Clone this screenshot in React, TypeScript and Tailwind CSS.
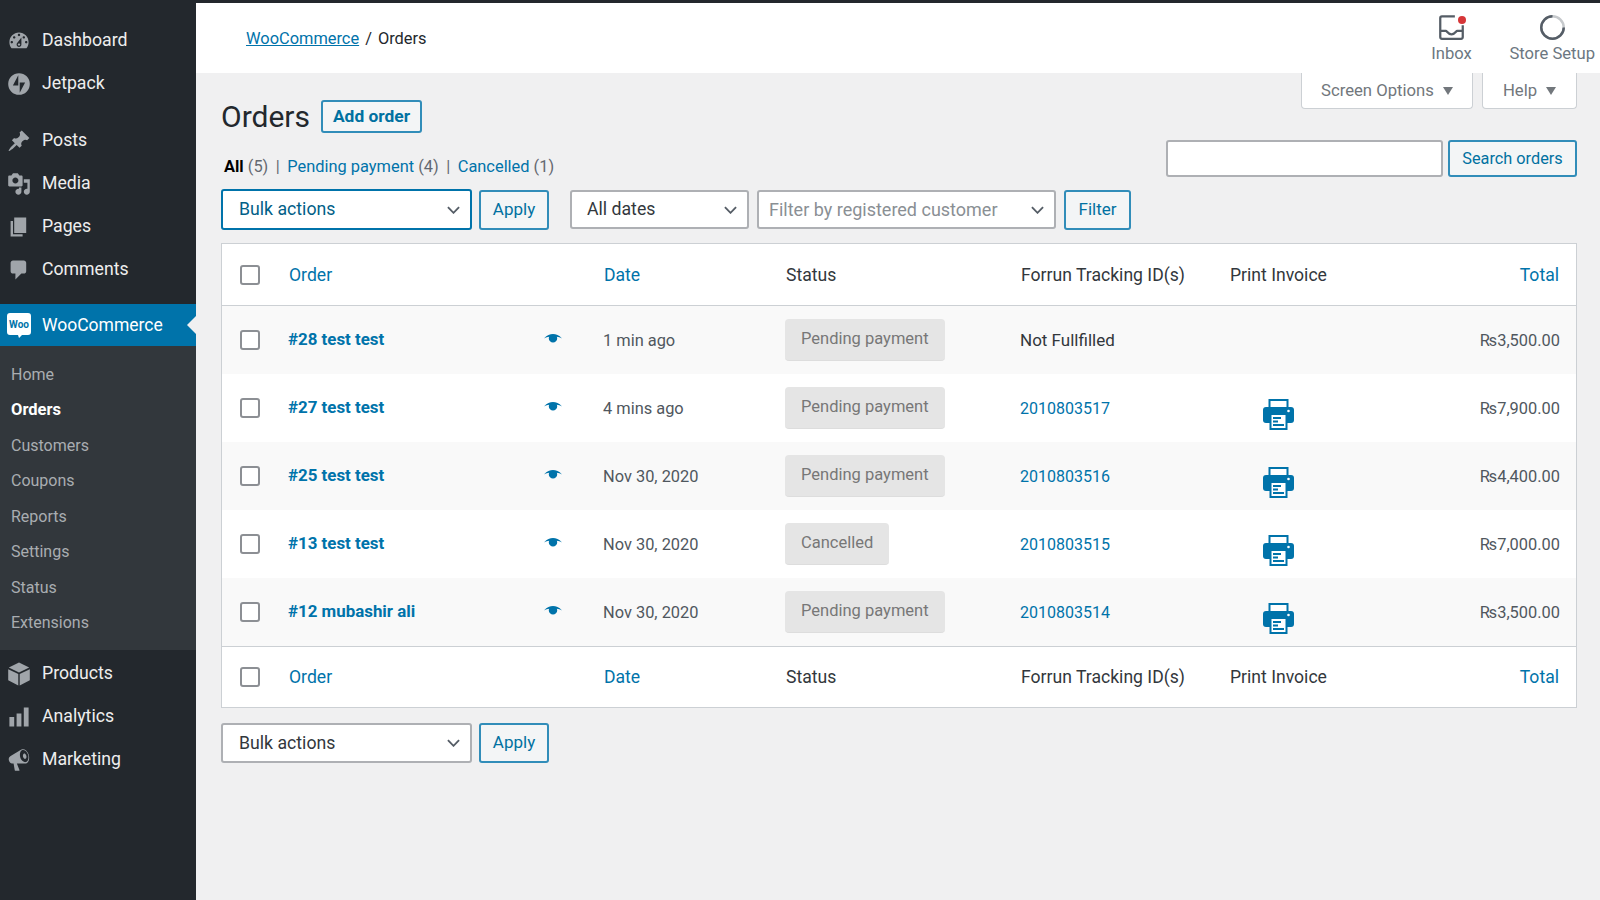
import type { ReactNode } from 'react'

const iconPaths: Record<string, string> = {
  dashboard: 'M3.76 16h12.48c1.1-1.37 1.76-3.11 1.76-5 0-4.42-3.58-8-8-8s-8 3.58-8 8c0 1.89.66 3.63 1.76 5zM10 4c.55 0 1 .45 1 1s-.45 1-1 1-1-.45-1-1 .45-1 1-1zM6 6c.55 0 1 .45 1 1s-.45 1-1 1-1-.45-1-1 .45-1 1-1zm8 0c.55 0 1 .45 1 1s-.45 1-1 1-1-.45-1-1 .45-1 1-1zm-5.37 5.55L12 7v6c0 1.1-.9 2-2 2s-2-.9-2-2c0-.57.24-1.08.63-1.45zM4 10c.55 0 1 .45 1 1s-.45 1-1 1-1-.45-1-1 .45-1 1-1zm12 0c.55 0 1 .45 1 1s-.45 1-1 1-1-.45-1-1 .45-1 1-1zm-5 3c0-.55-.45-1-1-1s-1 .45-1 1 .45 1 1 1 1-.45 1-1z',
  jetpack: 'M10 1a9 9 0 1 0 0 18 9 9 0 0 0 0-18zM9.4 11.3H4.9L9.4 2.8zM10.6 17.2V8.7h4.5z',
  posts: 'M10.44 3.02l1.82-1.82 6.36 6.35-1.83 1.82c-1.05-.68-2.48-.57-3.41.36l-.75.75c-.92.93-1.04 2.35-.35 3.41l-1.83 1.82-2.41-2.41-2.8 2.79c-.42.42-3.38 2.71-3.8 2.29s1.86-3.39 2.28-3.81l2.79-2.79L4.1 9.36l1.83-1.82c1.05.69 2.48.57 3.4-.36l.75-.75c.93-.92 1.05-2.35.36-3.41z',
  media: 'M13 11V4c0-.55-.45-1-1-1h-1.67L9 1H5L3.67 3H2c-.55 0-1 .45-1 1v7c0 .55.45 1 1 1h10c.55 0 1-.45 1-1zM7 4.5c1.38 0 2.5 1.12 2.5 2.5S8.38 9.5 7 9.5 4.5 8.38 4.5 7 5.62 4.5 7 4.5zM14 6h5v10.5c0 1.38-1.12 2.5-2.5 2.5S14 17.88 14 16.5s1.12-2.5 2.5-2.5c.17 0 .34.02.5.05V9h-3V6zm-4 8.05V13h2v3.5c0 1.38-1.12 2.5-2.5 2.5S7 17.88 7 16.5 8.12 14 9.5 14c.17 0 .34.02.5.05z',
  pages: 'M6 15V2h10v13H6zm-1 1h8v2H3V5h2v11z',
  comments: 'M5 2h9c1.1 0 2 .9 2 2v7c0 1.1-.9 2-2 2h-2l-5 5v-5H5c-1.1 0-2-.9-2-2V4c0-1.1.9-2 2-2z',
  products: 'M10 .500l8.500 4-8.500 4.200-8.500-4.200zM1 6l8.400 4.100V19.500L1 15.300zM19 6l-8.400 4.100V19.500l8.400-4.200z',
  analytics: 'M18 18V2h-4v16h4zm-6 0V7H8v11h4zm-6 0v-8H2v8h4z',
  marketing: 'M18.15 5.94c.46 1.62.38 3.22-.02 4.48-.42 1.28-1.26 2.18-2.3 2.48-.16.06-.26.06-.4.06-.06.02-.12.02-.18.02-.06.02-.14.02-.22.02h-6.8l2.22 5.5c.02.14-.06.26-.14.34-.08.1-.24.16-.34.16H6.95c-.1 0-.26-.06-.34-.16-.08-.08-.16-.2-.14-.34l-1-5.5H4.25l-.02-.02c-.5.06-1.08-.18-1.54-.62s-.88-1.08-1.06-1.88c-.24-.8-.2-1.56-.02-2.2.18-.62.58-1.08 1.06-1.3l.02-.02 9-5.4c.1-.06.18-.1.24-.16.06-.04.14-.08.24-.12.16-.08.28-.12.5-.18 1.04-.3 2.24.1 3.22.98s1.86 2.2 2.32 3.82zm-2.42 5.78v-.02c.88-.26 1.52-1.02 1.86-2.1s.38-2.5 0-3.9c-.4-1.38-1.16-2.5-2.02-3.24-.86-.72-1.82-1.04-2.7-.78-.86.24-1.5 1.02-1.84 2.08-.34 1.08-.4 2.5 0 3.9.4 1.36 1.16 2.5 2 3.22.86.74 1.84 1.06 2.7.84zm-1.54-7.04c.32-.1.7.02 1.06.34s.7.82.86 1.44c.16.6.14 1.18 0 1.66-.16.48-.44.84-.82.94s-.7-.02-1.06-.34-.7-.82-.86-1.44c-.16-.6-.14-1.2.02-1.66.14-.48.44-.84.8-.94z',
}

function MenuIcon({ name }: { name: string }) {
  return (
    <svg viewBox="0 0 20 20" className="w-[24px] h-[24px] shrink-0 text-[#a0a5aa]" fill="currentColor">
      <path fillRule="evenodd" d={iconPaths[name]} />
    </svg>
  )
}

function MenuItem({ icon, label }: { icon: string; label: string }) {
  return (
    <div className="h-[43px] flex items-center pl-[7px] gap-[11px] text-[#eeeeee] text-[17.7px]">
      <MenuIcon name={icon} />
      <span>{label}</span>
    </div>
  )
}

const subItems = ['Home', 'Orders', 'Customers', 'Coupons', 'Reports', 'Settings', 'Status', 'Extensions']

function Sidebar() {
  return (
    <aside className="w-[196px] shrink-0 h-[900px] bg-[#23282d] pt-[19px]">
      <MenuItem icon="dashboard" label="Dashboard" />
      <MenuItem icon="jetpack" label="Jetpack" />
      <div className="h-[14px]" />
      <MenuItem icon="posts" label="Posts" />
      <MenuItem icon="media" label="Media" />
      <MenuItem icon="pages" label="Pages" />
      <MenuItem icon="comments" label="Comments" />
      <div className="relative mt-[13px] h-[42px] bg-[#0073aa] flex items-center pl-[7px] gap-[11px] text-white text-[17.5px]">
        <svg viewBox="0 0 24 25" className="w-[24px] h-[25px] shrink-0">
          <path d="M3 0h18a3 3 0 0 1 3 3v16a3 3 0 0 1-3 3h-6l-3 3-1-3H3a3 3 0 0 1-3-3V3a3 3 0 0 1 3-3z" fill="#ffffff" />
          <text x="12" y="15" textAnchor="middle" fontSize="10" fontWeight="700" fill="#0073aa" fontFamily="Roboto, sans-serif">Woo</text>
        </svg>
        <span className="pt-px">WooCommerce</span>
        <div className="absolute right-0 top-[12px] w-0 h-0 border-y-[9px] border-y-transparent border-r-[9px] border-r-[#f0f0f1]" />
      </div>
      <div className="bg-[#32373c] h-[304px] pt-[11px] pl-[11px]">
        {subItems.map((item) => (
          <div
            key={item}
            className={
              item === 'Orders'
                ? 'h-[35.5px] flex items-center text-[16.5px] font-bold text-white'
                : 'h-[35.5px] flex items-center text-[16px] text-[#a9adb1]'
            }
          >
            {item}
          </div>
        ))}
      </div>
      <div className="h-[2px]" />
      <MenuItem icon="products" label="Products" />
      <MenuItem icon="analytics" label="Analytics" />
      <MenuItem icon="marketing" label="Marketing" />
    </aside>
  )
}

function TopBar() {
  return (
    <header className="h-[70px] bg-white flex items-center justify-between">
      <div className="pl-[50px] pt-[2px] text-[16.4px] flex gap-[6px] text-[#23282d]">
        <span className="text-[#0073aa] underline">WooCommerce</span>
        <span>/</span>
        <span>Orders</span>
      </div>
      <div className="self-start pt-[11px] flex items-start pr-[5px] text-[#6c7781] text-[16.6px]">
        <div className="flex flex-col items-center w-[60px] mr-[28px]">
          <div className="relative h-[28px]">
            <svg viewBox="0 0 24 24" className="w-[27px] h-[27px]" fill="none" stroke="#555d66" strokeWidth="2">
              <path d="M15 2H3.500A1.500 1.500 0 0 0 2 3.500v17A1.500 1.500 0 0 0 3.500 22h17a1.500 1.500 0 0 0 1.500-1.500V10" />
              <path d="M2 15h5c1 0 1.500 3 5 3s4-3 5-3h5" />
            </svg>
            <div className="absolute top-[2px] right-[-1px] w-[8px] h-[8px] rounded-full bg-[#d63638]" />
          </div>
          <span>Inbox</span>
        </div>
        <div className="flex flex-col items-center">
          <div className="h-[28px]">
            <svg viewBox="0 0 24 24" className="w-[27px] h-[27px]" fill="none" strokeWidth="2.200">
              <circle cx="12" cy="12" r="10" stroke="#c6c9cc" />
              <path d="M12 2a10 10 0 1 0 10 10" stroke="#555d66" />
            </svg>
          </div>
          <span>Store Setup</span>
        </div>
      </div>
    </header>
  )
}

function Button({ children, className }: { children: ReactNode; className: string }) {
  return (
    <div className={`flex items-center justify-center rounded-[3px] border-2 border-[#0073aa]/80 bg-[#f3f5f6] text-[#0071a1] ${className}`}>
      {children}
    </div>
  )
}

function Chevron() {
  return (
    <svg viewBox="0 0 14 8" className="w-[13px] h-[8px]" fill="none" stroke="#555d66" strokeWidth="2">
      <path d="M1 1l6 6 6-6" />
    </svg>
  )
}

function Select({ label, className }: { label: string; className: string }) {
  return (
    <div className={`flex items-center justify-between rounded-[3px] bg-white pr-[10px] ${className}`}>
      <span>{label}</span>
      <Chevron />
    </div>
  )
}

const gridCols = 'grid grid-cols-[67px_315px_181px_236px_209px_99px_1fr] items-center'

function Checkbox() {
  return <div className="ml-[18px] w-[20px] h-[20px] rounded-[3px] border-2 border-[#8c8f94] bg-white" />
}

function HeaderRow({ className }: { className: string }) {
  return (
    <div className={`${gridCols} ${className} text-[17.6px]`}>
      <Checkbox />
      <span className="text-[#0073aa] pt-px">Order</span>
      <span className="text-[#0073aa] pt-px">Date</span>
      <span className="text-[#32373c] pt-px ml-px">Status</span>
      <span className="text-[#32373c] pt-px whitespace-nowrap">Forrun Tracking ID(s)</span>
      <span className="text-[#32373c] pt-px whitespace-nowrap">Print Invoice</span>
      <span className="text-[#0073aa] pt-px text-right pr-[17px]">Total</span>
    </div>
  )
}

function Eye() {
  return (
    <svg viewBox="0 0 18 10" className="w-[18px] h-[10px]" fill="#0073aa">
      <path d="M0 4.500C3 1 6 0 9 0s6 1 9 4.500c-2-1-3.500-1.500-5.200-1.700.3.600.4 1 .4 1.600a4.200 4.200 0 0 1-8.400 0c0-.6.1-1 .4-1.600C3.500 3 2 3.500 0 4.500z" />
    </svg>
  )
}

function Printer() {
  return (
    <svg viewBox="0 0 31 31" className="w-[31px] h-[31px] mx-auto mt-[12px] -translate-x-px">
      <rect x="6.500" y="1" width="18" height="10" fill="#ffffff" stroke="#0073aa" strokeWidth="2" />
      <rect x="0" y="8" width="31" height="16" rx="3" fill="#0073aa" />
      <circle cx="25.500" cy="12" r="1.300" fill="#ffffff" />
      <rect x="7.500" y="15" width="16" height="15" fill="#ffffff" stroke="#0073aa" strokeWidth="2" />
      <path d="M10 19h8M10 22.500h5M10 26h11" stroke="#0073aa" strokeWidth="1.800" />
    </svg>
  )
}

const orders = [
  { name: '#28 test test', date: '1 min ago', status: 'Pending payment', tracking: '', total: '3,500.00' },
  { name: '#27 test test', date: '4 mins ago', status: 'Pending payment', tracking: '2010803517', total: '7,900.00' },
  { name: '#25 test test', date: 'Nov 30, 2020', status: 'Pending payment', tracking: '2010803516', total: '4,400.00' },
  { name: '#13 test test', date: 'Nov 30, 2020', status: 'Cancelled', tracking: '2010803515', total: '7,000.00' },
  { name: '#12 mubashir ali', date: 'Nov 30, 2020', status: 'Pending payment', tracking: '2010803514', total: '3,500.00' },
]

function OrdersTable() {
  return (
    <div className="mt-[13px] border border-[#ccd0d4] bg-white">
      <HeaderRow className="h-[62px] border-b border-[#ccd0d4]" />
      {orders.map((order, i) => (
        <div key={order.name} className={`${gridCols} h-[68px] text-[16.4px] text-[#50575e] ${i % 2 === 0 ? 'bg-[#f9f9f9]' : 'bg-white'}`}>
          <Checkbox />
          <div className="flex items-center justify-between pr-[42px] -mt-px -ml-px">
            <span className="font-bold text-[#0073aa] text-[16.9px]">{order.name}</span>
            <Eye />
          </div>
          <span className="pt-[2px] -ml-px">{order.date}</span>
          <div className="-mt-[1px]">
            <span className="inline-flex items-center h-[42px] px-[16px] rounded-[4px] bg-[#e5e5e5] text-[#777777] text-[16.5px] border-b border-[#dddddd]">
              {order.status}
            </span>
          </div>
          {order.tracking ? (
            <span className="text-[#0073aa] text-[16px] pt-[2px] -ml-px">{order.tracking}</span>
          ) : (
            <span className="text-[#32373c] text-[17px] pt-[2px] -ml-px">Not Fullfilled</span>
          )}
          <div>{order.tracking ? <Printer /> : null}</div>
          <span className="text-right pr-[16px] pt-[2px]">₨{order.total}</span>
        </div>
      ))}
      <HeaderRow className="h-[61px] border-t border-[#ccd0d4]" />
    </div>
  )
}

function TabArrow() {
  return <div className="w-0 h-0 border-x-[5.500px] border-x-transparent border-t-[8px] border-t-[#72777c]" />
}

export default function App() {
  return (
    <div className="flex w-full h-[900px] overflow-hidden bg-[#f0f0f1] font-['Roboto',sans-serif]">
      <Sidebar />
      <main className="flex-1 border-t-[3px] border-[#23282d]">
        <TopBar />
        <div className="pl-[25px] pr-[23px]">
          <div className="flex justify-end gap-[9px] h-[36px] text-[16.7px] text-[#72777c]">
            <div className="w-[172px] bg-white border border-t-0 border-[#ccd0d4] rounded-b-[4px] flex items-center justify-center gap-[9px]">
              <span className="pt-px">Screen Options</span>
              <TabArrow />
            </div>
            <div className="w-[95px] bg-white border border-t-0 border-[#ccd0d4] rounded-b-[4px] flex items-center justify-center gap-[9px]">
              <span className="pt-px">Help</span>
              <TabArrow />
            </div>
          </div>
          <div className="flex items-center h-[33px] -mt-[9px] gap-[11px]">
            <h1 className="text-[30px] text-[#23282d]">Orders</h1>
            <Button className="w-[101px] h-[33px] text-[17.4px] font-bold">Add order</Button>
          </div>
          <div className="flex justify-between h-[37px] mt-[7px]">
            <div className="pt-[15px] pl-[3px] text-[16.4px] flex gap-[7.500px] text-[#646970]">
              <span><span className="font-bold text-black">All</span> (5)</span>
              <span>|</span>
              <span><span className="text-[#0073aa]">Pending payment</span> (4)</span>
              <span>|</span>
              <span><span className="text-[#0073aa]">Cancelled</span> (1)</span>
            </div>
            <div className="flex gap-[5px]">
              <div className="w-[277px] h-[37px] rounded-[3px] bg-white border-2 border-[#8c8f94]/70" />
              <Button className="w-[129px] h-[37px] pt-[2px] text-[16.3px]">Search orders</Button>
            </div>
          </div>
          <div className="flex items-center h-[41px] mt-[12px] text-[17.7px]">
            <Select label="Bulk actions" className="w-[251px] h-[41px] pl-[16px] border-2 border-[#0073aa] text-[#016087]" />
            <Button className="w-[70px] h-[40px] ml-[7px] text-[17px]">Apply</Button>
            <Select label="All dates" className="w-[179px] h-[39px] ml-[21px] pl-[15px] border-2 border-[#8c8f94]/70 text-[#32373c]" />
            <Select label="Filter by registered customer" className="w-[299px] h-[39px] ml-[8px] pl-[10px] border-2 border-[#8c8f94]/70 text-[#8a8f94] text-[18px]" />
            <Button className="w-[67px] h-[40px] ml-[8px] text-[17px]">Filter</Button>
          </div>
          <OrdersTable />
          <div className="flex items-center h-[40px] mt-[15px] text-[17.7px]">
            <Select label="Bulk actions" className="w-[251px] h-[40px] pl-[16px] border-2 border-[#8c8f94]/70 text-[#32373c]" />
            <Button className="w-[70px] h-[40px] ml-[7px] text-[17px]">Apply</Button>
          </div>
        </div>
      </main>
    </div>
  )
}
